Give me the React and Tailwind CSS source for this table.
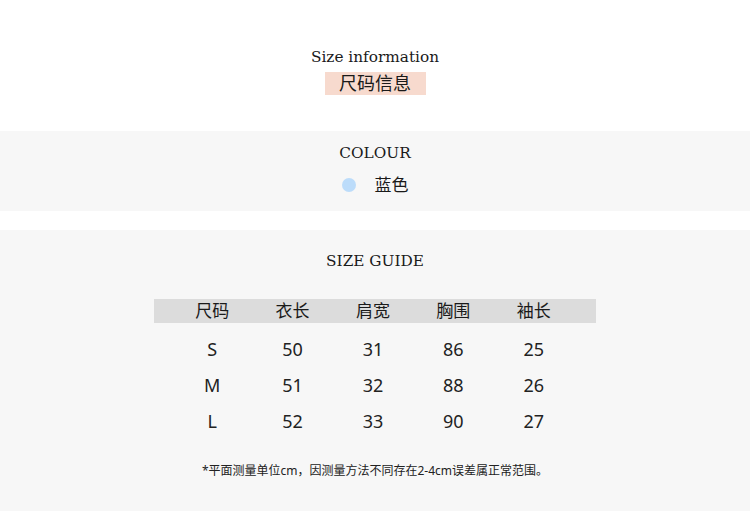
import React from "react";

const COLUMNS = ["尺码", "衣长", "肩宽", "胸围", "袖长"];

const ROWS = [
  ["S", "50", "31", "86", "25"],
  ["M", "51", "32", "88", "26"],
  ["L", "52", "33", "90", "27"],
];

const serif = "font-['DejaVu_Serif','Liberation_Serif',serif]";
const sans = "font-['Noto_Sans','Noto_Sans_CJK_SC',sans-serif]";

export default function App() {
  return (
    <div className={`w-[750px] h-[523px] bg-white text-[#1a1a1a] ${sans}`}>
      {/* titulo */}
      <section className="h-[131px] pt-[47px] flex flex-col items-center">
        <div className={`${serif} text-[15.3px] leading-[20px]`}>Size information</div>
        <div className="mt-[5px] w-[101px] h-[23px] bg-[#f7dace] flex items-center justify-center text-[18px] leading-[23px]">
          尺码信息
        </div>
      </section>

      {/* cor */}
      <section className="h-[80px] bg-[#f7f7f7] pt-[12px] flex flex-col items-center">
        <div className={`${serif} text-[15.3px] leading-[20px]`}>COLOUR</div>
        <div className="mt-[12px] h-[20px] flex items-center gap-[19px]">
          <span className="w-[14px] h-[14px] rounded-full bg-[#bcdcfa]" />
          <span className="text-[17px] leading-[20px]">蓝色</span>
        </div>
      </section>

      <div className="h-[19px]" />

      {/* tabela */}
      <section className="h-[281px] bg-[#f7f7f7] pt-[21px] flex flex-col items-center">
        <div className={`${serif} text-[15.3px] leading-[20px]`}>SIZE GUIDE</div>

        <div className="mt-[28px] w-[442px] h-[24px] bg-[#dcdcdc] flex pl-[18px] pr-[22px]">
          {COLUMNS.map((c) => (
            <div key={c} className="w-[80.4px] flex items-center justify-center text-[17px] leading-[24px]">
              {c}
            </div>
          ))}
        </div>

        <div className="mt-[8px] w-[442px]">
          {ROWS.map((row) => (
            <div key={row[0]} className="h-[36px] flex pl-[18px] pr-[22px]">
              {row.map((v, i) => (
                <div key={i} className="w-[80.4px] flex items-center justify-center text-[18px] text-[#222]">
                  {v}
                </div>
              ))}
            </div>
          ))}
        </div>

        <p className="mt-[24px] text-[12px] leading-[16px] text-[#222]">
          *平面测量单位cm，因测量方法不同存在2-4cm误差属正常范围。
        </p>
      </section>
    </div>
  );
}
